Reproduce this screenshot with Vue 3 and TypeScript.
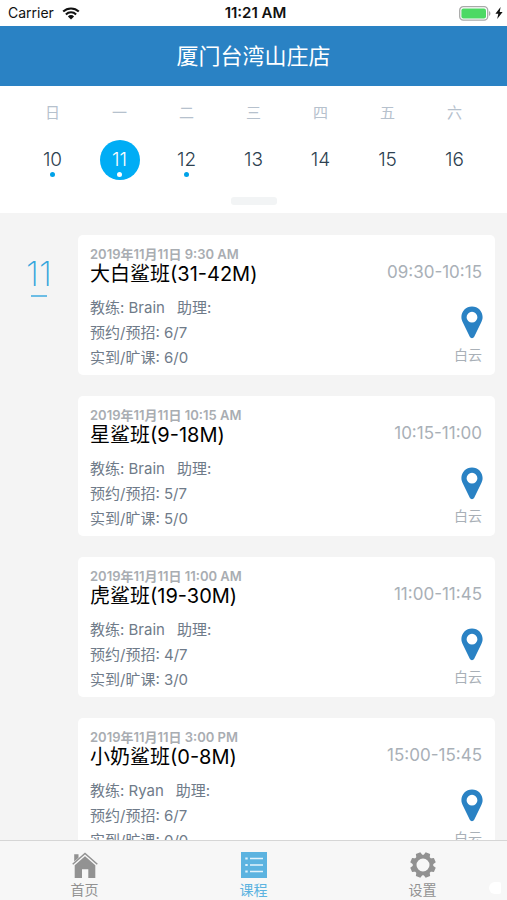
<script setup lang="ts">
import { ref } from 'vue'

interface Day {
  label: string
  date: number
  marked: boolean
}

interface Lesson {
  stamp: string
  title: string
  range: string
  coach: string
  assistant: string
  booked: string
  attended: string
  place: string
}

const days: Day[] = [
  { label: '日', date: 10, marked: true },
  { label: '一', date: 11, marked: true },
  { label: '二', date: 12, marked: true },
  { label: '三', date: 13, marked: false },
  { label: '四', date: 14, marked: false },
  { label: '五', date: 15, marked: false },
  { label: '六', date: 16, marked: false },
]

const lessons: Lesson[] = [
  { stamp: '2019年11月11日 9:30 AM', title: '大白鲨班(31-42M)', range: '09:30-10:15', coach: 'Brain', assistant: '', booked: '6/7', attended: '6/0', place: '白云' },
  { stamp: '2019年11月11日 10:15 AM', title: '星鲨班(9-18M)', range: '10:15-11:00', coach: 'Brain', assistant: '', booked: '5/7', attended: '5/0', place: '白云' },
  { stamp: '2019年11月11日 11:00 AM', title: '虎鲨班(19-30M)', range: '11:00-11:45', coach: 'Brain', assistant: '', booked: '4/7', attended: '3/0', place: '白云' },
  { stamp: '2019年11月11日 3:00 PM', title: '小奶鲨班(0-8M)', range: '15:00-15:45', coach: 'Ryan', assistant: '', booked: '6/7', attended: '0/0', place: '白云' },
]

const selected = ref(11)
const tab = ref('课程')
const teeth = [0, 45, 90, 135, 180, 225, 270, 315]
</script>

<template>
  <div class="screen">
    <div class="status">
      <div class="carrier">
        <span>Carrier</span>
        <svg class="wifi" viewBox="0 0 18 13" aria-hidden="true">
          <path d="M1.2 4.6a11.2 11.2 0 0 1 15.6 0M3.9 7.4a7.3 7.3 0 0 1 10.2 0" fill="none" stroke="#111" stroke-width="2.1" />
          <path d="M9 12.6 5.9 9.4a4.4 4.4 0 0 1 6.2 0z" fill="#111" />
        </svg>
      </div>
      <span class="clock">11:21 AM</span>
      <div class="power">
        <svg class="battery" viewBox="0 0 32 15" aria-hidden="true">
          <rect x="0.7" y="0.7" width="28" height="13.4" rx="3.6" fill="#fff" stroke="#a9aaa9" stroke-width="1.3" />
          <rect x="2.4" y="2.4" width="24.6" height="10" rx="2" fill="#4cd964" />
          <path d="M30 5v5c1.900-.8 1.900-4.200 0-5z" fill="#a9aaa9" />
        </svg>
        <svg class="bolt" viewBox="0 0 8 12" aria-hidden="true">
          <path d="M5.600 0 .4 6.800h2.900L2.200 12l5.400-7H4.700z" fill="#111" />
        </svg>
      </div>
    </div>

    <header class="header">
      <h1>厦门台湾山庄店</h1>
    </header>

    <section class="calendar">
      <div class="week">
        <div v-for="day in days" :key="day.date" class="day">
          <span class="weekday">{{ day.label }}</span>
          <button type="button" class="date" :class="{ selected: selected === day.date }" @click="selected = day.date">
            <span>{{ day.date }}</span>
            <i v-if="day.marked" class="dot"></i>
          </button>
        </div>
      </div>
      <div class="knob"></div>
    </section>

    <main class="agenda">
      <div class="marker">
        <span>{{ selected }}</span>
        <i></i>
      </div>
      <div class="cards">
        <article v-for="lesson in lessons" :key="lesson.range" class="card">
          <div class="info">
            <time class="stamp">{{ lesson.stamp }}</time>
            <h2>{{ lesson.title }}</h2>
            <p class="staff"><span>教练: {{ lesson.coach }}</span><span>助理: {{ lesson.assistant }}</span></p>
            <p>预约/预招: {{ lesson.booked }}</p>
            <p>实到/旷课: {{ lesson.attended }}</p>
          </div>
          <div class="side">
            <span class="range">{{ lesson.range }}</span>
            <svg class="pin" viewBox="0 0 22 33" aria-hidden="true">
              <path fill-rule="evenodd" d="M11 .5C5 .5.400 5.200.400 11c0 2.300.7 4 1.700 6l6.700 13.800c.9 1.900 3.500 1.900 4.400 0L19.900 17c1-2 1.700-3.700 1.700-6C21.600 5.200 17 .5 11 .5zM11 5.800a5.400 5.400 0 1 1 0 10.800 5.400 5.400 0 0 1 0-10.800z" fill="#2a82c4" />
            </svg>
            <span class="place">{{ lesson.place }}</span>
          </div>
        </article>
      </div>
    </main>

    <nav class="tabs">
      <button type="button" :class="{ active: tab === '首页' }" @click="tab = '首页'">
        <svg viewBox="0 0 26 26" aria-hidden="true">
          <path d="M2.200 2.300h4.300v3.400L2.200 9.500z" fill="currentColor" />
          <path d="M.7 12.300 13 1.400l12.300 10.900" fill="none" stroke="currentColor" stroke-width="1.500" />
          <path d="M13 4.200 23.300 13.300V26h-7v-8.800H10V26H2.700V13.300z" fill="currentColor" />
        </svg>
        <span>首页</span>
      </button>
      <button type="button" :class="{ active: tab === '课程' }" @click="tab = '课程'">
        <svg viewBox="0 0 26 26" aria-hidden="true">
          <path d="M0 0h26v26H0z" fill="currentColor" />
          <path d="M9 6.500h13M9 13h13M9 19.500h13" stroke="#e2f3fc" stroke-width="1.500" />
          <path d="M4.300 6.500h2.400M4.300 13h2.400M4.300 19.500h2.400" stroke="#e2f3fc" stroke-width="2.200" />
        </svg>
        <span>课程</span>
      </button>
      <button type="button" :class="{ active: tab === '设置' }" @click="tab = '设置'">
        <svg viewBox="0 0 26 26" aria-hidden="true">
          <circle cx="13" cy="13" r="8.400" fill="none" stroke="currentColor" stroke-width="3.800" />
          <path v-for="angle in teeth" :key="angle" d="m9.500 4.200 1.100-4h4.800l1.100 4z" fill="currentColor" :transform="`rotate(${angle + 22.5} 13 13)`" />
        </svg>
        <span>设置</span>
      </button>
      <i class="handle"></i>
    </nav>
  </div>
</template>

<style>
body {
  background: #f4f4f4;
}
</style>

<style scoped>
.screen {
  display: flex;
  flex-direction: column;
  height: 100vh;
  overflow: hidden;
  background: #f4f4f4;
  font-family: Inter, "Noto Sans CJK SC", sans-serif;
}

h1,
h2,
p {
  margin: 0;
  font-weight: 400;
}

button {
  padding: 0;
  border: 0;
  background: none;
  font: inherit;
  cursor: pointer;
}

.status {
  display: grid;
  grid-template-columns: 1fr auto 1fr;
  align-items: center;
  flex: none;
  height: 26px;
  padding: 0 4px 0 8px;
  background: #fff;
  color: #111;
  font-size: 14px;
  line-height: 26px;
}

.carrier {
  display: flex;
  align-items: center;
  gap: 8px;
}

.wifi {
  width: 18px;
  height: 13px;
}

.clock {
  font-size: 15px;
  font-weight: 600;
}

.power {
  display: flex;
  align-items: center;
  justify-content: flex-end;
  gap: 4px;
}

.battery {
  width: 32px;
  height: 15px;
}

.bolt {
  width: 8px;
  height: 12px;
}

.header {
  flex: none;
  padding: 15px 0;
  background: #2a82c4;
  color: #fff;
  text-align: center;
}

.header h1 {
  font-size: 22px;
  line-height: 30px;
}

.calendar {
  flex: none;
  padding: 16px 19px 8px;
  background: #fff;
}

.week {
  display: grid;
  grid-template-columns: repeat(7, 1fr);
}

.day {
  display: flex;
  flex-direction: column;
  align-items: center;
  gap: 16px;
}

.weekday {
  color: #b6c1cd;
  font-size: 15px;
  line-height: 22px;
}

.date {
  position: relative;
  width: 40px;
  height: 40px;
  border-radius: 50%;
  color: #2d4150;
  font-size: 19px;
  font-weight: 300;
  line-height: 40px;
}

.date.selected {
  background: #00adf5;
  color: #fff;
}

.dot {
  position: absolute;
  bottom: 3px;
  left: 50%;
  width: 5px;
  height: 5px;
  margin-left: -3px;
  border-radius: 50%;
  background: #00a2e8;
}

.selected .dot {
  background: #fff;
}

.knob {
  width: 46px;
  height: 8px;
  margin: 17px auto 0;
  border-radius: 3px;
  background: #f2f4f5;
}

.agenda {
  display: flex;
  flex: 1;
  min-height: 0;
  overflow: hidden;
  padding: 22px 12px 0 0;
}

.marker {
  display: flex;
  flex-direction: column;
  align-items: center;
  flex: none;
  width: 78px;
  padding-top: 20px;
  color: #33a5dc;
  font-size: 34px;
  font-weight: 200;
  line-height: 38px;
}

.marker i {
  width: 16px;
  height: 2px;
  margin-top: 2px;
  background: #6cbde5;
}

.cards {
  display: flex;
  flex: 1;
  flex-direction: column;
  gap: 21px;
}

.card {
  display: flex;
  flex: none;
  justify-content: space-between;
  padding: 11px 13px 5px 12px;
  border-radius: 5px;
  background: #fff;
}

.info {
  color: #6f7b89;
  font-size: 15px;
  line-height: 25px;
}

.stamp {
  display: block;
  color: #a9adb2;
  font-size: 13px;
  font-weight: 600;
  line-height: 16px;
}

.info h2 {
  margin-bottom: 9px;
  color: #000;
  font-size: 20px;
  line-height: 24px;
}

.staff {
  display: flex;
  gap: 12px;
}

.side {
  display: flex;
  flex-direction: column;
  align-items: flex-end;
  color: #a9b0b7;
}

.range {
  padding-top: 14px;
  font-size: 17px;
  line-height: 24px;
}

.pin {
  width: 22px;
  height: 33px;
  margin: 22px -1px 5px 0;
}

.place {
  font-size: 14px;
  line-height: 22px;
}

.tabs {
  position: relative;
  display: grid;
  grid-template-columns: repeat(3, 1fr);
  flex: none;
  height: 60px;
  box-sizing: border-box;
  border-top: 1px solid #d6d6d6;
  background: #f7f7f7;
}

.tabs button {
  display: flex;
  flex-direction: column;
  align-items: center;
  gap: 2px;
  padding-top: 11px;
  color: #929292;
  font-size: 14px;
  line-height: 20px;
}

.tabs button.active {
  color: #5cb3e0;
}

.tabs svg {
  width: 26px;
  height: 26px;
}

.handle {
  position: absolute;
  right: 6px;
  bottom: 6px;
  width: 12px;
  height: 12px;
  border-radius: 6px 2px 2px 6px;
  background: #fff;
}
</style>
